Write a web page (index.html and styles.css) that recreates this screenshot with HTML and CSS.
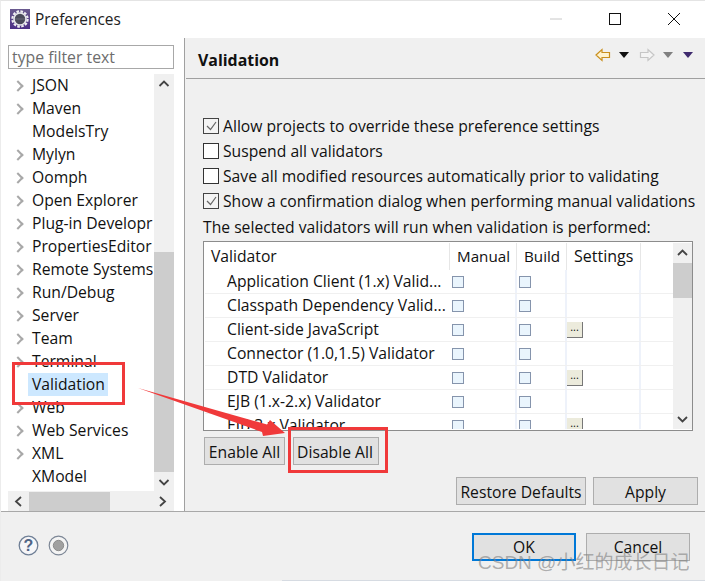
FILE: index.html
```html
<!DOCTYPE html>
<html lang="en">
<head>
<meta charset="utf-8">
<title>Preferences</title>
<link rel="stylesheet" href="styles.css">
</head>
<body>
<div class="window">
  <header class="titlebar">
    <svg class="app-icon" width="20" height="20" viewBox="0 0 20 20"><defs><linearGradient id="bg" x1="0" y1="0" x2="0" y2="1"><stop offset="0" stop-color="#6a5a8e"/><stop offset="1" stop-color="#4c2f86"/></linearGradient></defs><rect width="20" height="20" fill="url(#bg)"/><circle cx="10" cy="10" r="7.600" fill="none" stroke="#efeff2" stroke-width="2.200" stroke-dasharray="2.600 1.400"/><circle cx="10" cy="10" r="6" fill="#4a4a5a" stroke="#e6e6ea" stroke-width="1.600"/><path d="M5 10h10" stroke="#6a6a78" stroke-width="1"/></svg>
    <span class="title">Preferences</span>
    <div class="win-controls">
      <svg width="14" height="14" viewBox="0 0 14 14"><path d="M1 7h12" stroke="#c8c8c8"/></svg>
      <svg width="14" height="14" viewBox="0 0 14 14"><rect x="1.5" y="1.5" width="11" height="11" fill="none" stroke="#111"/></svg>
      <svg width="14" height="14" viewBox="0 0 14 14"><path d="M1 1l12 12M13 1L1 13" stroke="#111" fill="none"/></svg>
    </div>
  </header>
  <div class="main">
    <aside class="sidebar">
      <div class="filter">type filter text</div>
      <div class="tree-area">
        <div class="tree-top">
          <ul class="tree">
            <li class="node has"><span>JSON</span></li>
            <li class="node has"><span>Maven</span></li>
            <li class="node"><span>ModelsTry</span></li>
            <li class="node has"><span>Mylyn</span></li>
            <li class="node has"><span>Oomph</span></li>
            <li class="node has"><span>Open Explorer</span></li>
            <li class="node has"><span>Plug-in Developr</span></li>
            <li class="node has"><span>PropertiesEditor</span></li>
            <li class="node has"><span>Remote Systems</span></li>
            <li class="node has"><span>Run/Debug</span></li>
            <li class="node has"><span>Server</span></li>
            <li class="node has"><span>Team</span></li>
            <li class="node has"><span>Terminal</span></li>
            <li class="node"><span class="selected">Validation</span></li>
            <li class="node has"><span>Web</span></li>
            <li class="node has"><span>Web Services</span></li>
            <li class="node has"><span>XML</span></li>
            <li class="node"><span>XModel</span></li>
          </ul>
          <div class="vscroll">
            <svg class="arrow" width="20" height="20" viewBox="0 0 20 20"><path d="M5.500 12l4.500-4.500 4.500 4.500" fill="none" stroke="#444" stroke-width="1.800"/></svg>
            <div class="v-gap"></div>
            <div class="v-thumb"></div>
            <svg class="arrow" width="20" height="20" viewBox="0 0 20 20"><path d="M5.500 8l4.500 4.500 4.500-4.500" fill="none" stroke="#444" stroke-width="1.800"/></svg>
          </div>
        </div>
        <div class="hscroll">
          <svg width="21" height="19" viewBox="0 0 21 19"><path d="M13 5l-5 4.500 5 4.500" fill="none" stroke="#444" stroke-width="1.800"/></svg>
          <div class="h-thumb"></div>
          <div class="h-gap"></div>
          <svg width="21" height="19" viewBox="0 0 21 19"><path d="M7 5l5 4.500-5 4.500" fill="none" stroke="#444" stroke-width="1.800"/></svg>
        </div>
      </div>
    </aside>
    <section class="content">
      <div class="content-head">
        <h1>Validation</h1>
        <div class="nav-icons">
          <svg width="16" height="14" viewBox="0 0 16 14"><path d="M1 7l6-5.500v3h7.500v5H7v3z" fill="#fff3cf" stroke="#c98f1e" stroke-width="1.200"/></svg>
          <svg class="tri" width="10" height="6" viewBox="0 0 10 6"><path d="M0 0h10L5 6z" fill="#111"/></svg>
          <svg class="fwd" width="16" height="14" viewBox="0 0 16 14"><path d="M15 7L9 1.500v3H1.500v5H9v3z" fill="#f4f4f4" stroke="#c6c6c6" stroke-width="1.200"/></svg>
          <svg class="tri" width="10" height="6" viewBox="0 0 10 6"><path d="M0 0h10L5 6z" fill="#808080"/></svg>
          <svg class="tri last" width="10" height="6" viewBox="0 0 10 6"><path d="M0 0h10L5 6z" fill="#3f2a6e"/></svg>
        </div>
      </div>
      <div class="content-body">
        <div class="checks">
          <label class="check-row"><span class="check on"><svg width="13" height="13" viewBox="0 0 13 13"><path d="M2 7l3.500 3.500L11 3" fill="none" stroke="#666" stroke-width="1.200"/></svg></span>Allow projects to override these preference settings</label>
          <label class="check-row"><span class="check"></span>Suspend all validators</label>
          <label class="check-row"><span class="check"></span>Save all modified resources automatically prior to validating</label>
          <label class="check-row"><span class="check on"><svg width="13" height="13" viewBox="0 0 13 13"><path d="M2 7l3.500 3.500L11 3" fill="none" stroke="#666" stroke-width="1.200"/></svg></span>Show a confirmation dialog when performing manual validations</label>
        </div>
        <p class="table-label">The selected validators will run when validation is performed:</p>
        <div class="table-box">
          <div class="grid">
            <div class="row head"><div class="c1">Validator</div><div class="c2">Manual</div><div class="c3">Build</div><div class="c4">Settings</div><div class="c5"></div></div>
            <div class="row"><div class="c1">Application Client (1.x) Valid...</div><div class="c2"><i class="box"></i></div><div class="c3"><i class="box"></i></div><div class="c4"></div><div class="c5"></div></div>
            <div class="row"><div class="c1">Classpath Dependency Valid...</div><div class="c2"><i class="box"></i></div><div class="c3"><i class="box"></i></div><div class="c4"></div><div class="c5"></div></div>
            <div class="row"><div class="c1">Client-side JavaScript</div><div class="c2"><i class="box"></i></div><div class="c3"><i class="box"></i></div><div class="c4"><b class="more">...</b></div><div class="c5"></div></div>
            <div class="row"><div class="c1">Connector (1.0,1.5) Validator</div><div class="c2"><i class="box"></i></div><div class="c3"><i class="box"></i></div><div class="c4"></div><div class="c5"></div></div>
            <div class="row"><div class="c1">DTD Validator</div><div class="c2"><i class="box"></i></div><div class="c3"><i class="box"></i></div><div class="c4"><b class="more">...</b></div><div class="c5"></div></div>
            <div class="row"><div class="c1">EJB (1.x-2.x) Validator</div><div class="c2"><i class="box"></i></div><div class="c3"><i class="box"></i></div><div class="c4"></div><div class="c5"></div></div>
            <div class="row"><div class="c1">EJB 3.x Validator</div><div class="c2"><i class="box"></i></div><div class="c3"><i class="box"></i></div><div class="c4"><b class="more">...</b></div><div class="c5"></div></div>
          </div>
          <div class="table-scroll">
            <svg width="19" height="20" viewBox="0 0 19 20"><path d="M5 12l4.500-4.500L14 12" fill="none" stroke="#444" stroke-width="1.800"/></svg>
            <div class="t-thumb"></div>
            <div class="t-gap"></div>
            <svg width="19" height="20" viewBox="0 0 19 20"><path d="M5 8l4.500 4.500L14 8" fill="none" stroke="#444" stroke-width="1.800"/></svg>
          </div>
        </div>
        <div class="table-actions">
          <button class="btn enable">Enable All</button>
          <button class="btn disable">Disable All</button>
        </div>
        <div class="page-actions">
          <button class="btn restore">Restore Defaults</button>
          <button class="btn apply">Apply</button>
        </div>
      </div>
    </section>
  </div>
  <footer class="footer">
    <div class="help-icons">
      <svg width="21" height="21" viewBox="0 0 21 21"><circle cx="10.500" cy="10.500" r="9.300" fill="#f6f6f8" stroke="#6f7f96" stroke-width="1.300"/><text x="10.500" y="16" text-anchor="middle" class="q">?</text></svg>
      <svg width="21" height="21" viewBox="0 0 21 21"><circle cx="10.500" cy="10.500" r="9.300" fill="#f4f4f4" stroke="#7d8796" stroke-width="1.200"/><circle cx="10.500" cy="10.500" r="5.200" fill="#a0a0a0" stroke="#8c8c8c"/></svg>
    </div>
    <div class="dialog-actions">
      <button class="btn ok">OK</button>
      <button class="btn cancel">Cancel</button>
    </div>
  </footer>
  <svg class="red-arrow" width="160" height="60" viewBox="0 0 160 60"><path d="M1 1L130 37.500 133 33 148 46 126 49 125 45z" fill="#f0393a"/></svg>
  <div class="red-box box-a"></div>
  <div class="red-box box-b"></div>
  <div class="watermark">CSDN @小红的成长日记</div>
  <div class="bottom-strip"></div>
</div>
</body>
</html>
```
FILE: styles.css
```css
* { box-sizing: border-box; }
html, body { margin: 0; padding: 0; }
body { width: 705px; height: 581px; overflow: hidden; background: #f0f0f0; font-family: "Open Sans", "Noto Sans", sans-serif; font-size: 15.7px; color: #111; }
.window { position: relative; width: 705px; height: 581px; display: flex; flex-direction: column; border-top: 1px solid #e4e4e4; border-left: 1px solid #ececec; }
.titlebar { height: 37px; flex: none; background: #fff; display: flex; align-items: center; padding: 0 0 1px 9px; }
.app-icon { margin-right: 5px; }
.title { font-size: 15.4px; color: #222; }
.win-controls { margin-left: auto; display: flex; align-items: center; gap: 45px; padding: 0 24px 1px 0; }
.main { height: 474px; flex: none; display: flex; border-bottom: 1px solid #a8a8a8; }
.sidebar { width: 184px; flex: none; background: #fff; border-right: 1px solid #a0a0a0; padding: 7px 10px 0 7px; display: flex; flex-direction: column; }
.filter { height: 24px; flex: none; border: 1px solid #a8a8a8; padding-left: 3px; line-height: 23px; color: #6d6d6d; font-size: 15.8px; }
.tree-area { margin-top: 5px; flex: 1; display: flex; flex-direction: column; min-height: 0; }
.tree-top { flex: 1; display: flex; min-height: 0; }
.tree { list-style: none; margin: 0; padding: 0; width: 146px; flex: none; overflow: hidden; }
.node { height: 23px; line-height: 23px; padding-left: 23px; white-space: nowrap; position: relative; }
.node span { display: inline-block; padding: 0 1px; color: #111; }
.node.has::before { content: ""; position: absolute; left: 6px; top: 8px; width: 6px; height: 6px; border-top: 2px solid #a8a8a8; border-right: 2px solid #a8a8a8; transform: rotate(45deg); }
.node .selected { background: #cde8ff; padding: 0 3px 0 4px; margin-left: -3px; }
.vscroll { width: 20px; flex: none; display: flex; flex-direction: column; background: #f0f0f0; height: 418px; }
.arrow { flex: none; }
.v-gap { height: 158px; flex: none; }
.v-thumb { flex: 1; background: #cdcdcd; }
.hscroll { height: 20px; flex: none; display: flex; background: #f0f0f0; align-items: center; }
.h-thumb { width: 81px; height: 19px; background: #cdcdcd; flex: none; }
.h-gap { flex: 1; }
.content { flex: 1; min-width: 0; display: flex; flex-direction: column; padding-left: 1px; }
.content-head { height: 41px; flex: none; border-bottom: 1px solid #a0a0a0; display: flex; align-items: center; padding: 4px 12px 0 12px; }
h1 { margin: 0; font-size: 15.9px; font-weight: 700; color: #111; }
.nav-icons { margin-left: auto; display: flex; align-items: center; margin-top: -11px; }
.nav-icons .tri { margin-left: 8px; }
.nav-icons .fwd { margin-left: 10px; }
.nav-icons .tri.last { margin-left: 10px; }
.content-body { flex: 1; padding: 34px 0 0 17px; display: flex; flex-direction: column; }
.checks { display: flex; flex-direction: column; }
.check-row { height: 25px; display: flex; align-items: center; gap: 4px; white-space: nowrap; }
.check { width: 16px; height: 16px; flex: none; border: 1px solid #333; background: #fff; display: flex; align-items: center; justify-content: center; }
.check.on { background: #f4f4f4; border-color: #444; }
.table-label { margin: 3px 0 0; height: 22px; line-height: 22px; white-space: nowrap; }
.table-box { margin-top: 3px; width: 490px; height: 190px; flex: none; background: #fff; border: 1px solid #8c8c8c; display: flex; padding: 1px; }
.grid { width: 468px; flex: none; overflow: hidden; }
.row { display: grid; grid-template-columns: 245px 67px 50px 74px 32px; height: 24px; border-bottom: 1px solid #f0f0f0; align-items: stretch; }
.row.head { height: 27px; border-bottom: 0; }
.row > div { border-right: 2px solid #eef2fa; white-space: nowrap; overflow: hidden; line-height: 23px; display: flex; align-items: center; }
.row.head > div { border-right: 1px solid #e6e6e6; padding-left: 7px; }
.row.head .c5 { border-right: 0; }
.row .c1 { padding-left: 22px; border-right: 0; }
.row.head .c1 { padding-left: 6px; }
.row .c5 { border-right: 0; }
.row .c2, .row .c3 { padding-left: 2px; }
.row.head .c2, .row.head .c3 { padding-left: 7px; font-size: 15.2px; }
.row.head .c4 { font-size: 16px; }
.box { display: block; width: 12px; height: 12px; border: 1px solid #8594ac; background: #eaf5fd; }
.more { display: flex; justify-content: center; width: 16px; height: 16px; background: #ecebdc; border-right: 1px solid #777; border-bottom: 1px solid #777; font-weight: 400; font-size: 11px; line-height: 9px; margin-left: 0; }
.table-scroll { width: 19px; flex: none; display: flex; flex-direction: column; background: #f0f0f0; margin-left: 0; }
.t-thumb { height: 35px; flex: none; background: #cdcdcd; }
.t-gap { flex: 1; }
.table-actions { margin-top: 6px; display: flex; gap: 8px; padding-left: 1px; }
.btn { height: 28px; padding: 0; border: 1px solid #adadad; background: #e1e1e1; font: inherit; font-size: 15.7px; color: #111; }
.table-actions .btn, .page-actions .btn { padding-top: 2px; }
.enable { width: 81px; }
.disable { width: 86px; padding-right: 2px; }
.page-actions { margin-top: 12px; display: flex; justify-content: flex-end; gap: 7px; padding-right: 7px; }
.restore { width: 130px; }
.apply { width: 105px; }
.footer { flex: 1; display: flex; align-items: flex-start; padding: 21px 15px 0 17px; }
.help-icons { display: flex; gap: 9px; margin-top: 2px; }
.q { font-family: "Liberation Sans", sans-serif; font-size: 16px; font-weight: 700; fill: #4f6486; }
.dialog-actions { margin-left: auto; display: flex; gap: 10px; }
.ok { width: 104px; border: 2px solid #0078d7; }
.cancel { width: 104px; }
.red-box { position: absolute; border: 3px solid #f0393a; pointer-events: none; }
.box-a { left: 11px; top: 361px; width: 113px; height: 43px; }
.box-b { left: 287px; top: 426px; width: 100px; height: 46px; }
.red-arrow { position: absolute; left: 136px; top: 386px; }
.watermark { position: absolute; left: 477px; top: 549px; font-family: "Liberation Sans", "Noto Sans CJK SC", sans-serif; font-size: 19px; line-height: 26px; white-space: nowrap; color: rgba(130, 130, 130, 0.62); }
.bottom-strip { position: absolute; left: 281px; top: 579px; width: 423px; height: 1px; background: #d6dbe2; }
```
